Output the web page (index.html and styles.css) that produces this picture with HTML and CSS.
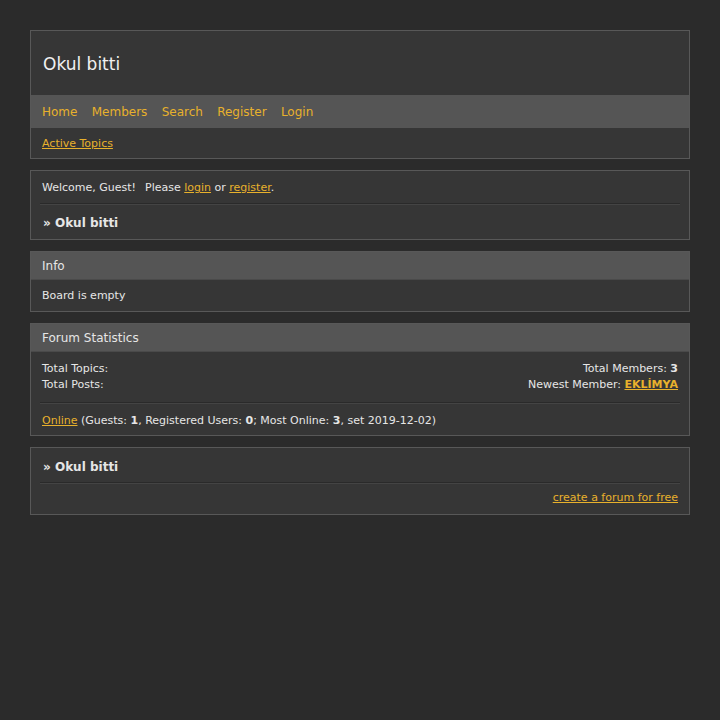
FILE: index.html
```html
<!DOCTYPE html>
<html>
<head>
<meta charset="utf-8">
<link rel="stylesheet" href="styles.css">
</head>
<body>
<div class="wrap">
  <div class="panel header">
    <div class="title">Okul bitti</div>
    <div class="nav">
      <a href="#">Home</a><a href="#">Members</a><a href="#">Search</a><a href="#">Register</a><a href="#">Login</a>
    </div>
    <div class="subnav"><a href="#">Active Topics</a></div>
  </div>

  <div class="panel">
    <div class="welcome">Welcome, Guest!<span class="gap"></span>Please <a href="#">login</a> or <a href="#">register</a>.</div>
    <div class="sep"></div>
    <div class="crumb">» Okul bitti</div>
  </div>

  <div class="panel">
    <div class="phead">Info</div>
    <div class="pbody">Board is empty</div>
  </div>

  <div class="panel">
    <div class="phead">Forum Statistics</div>
    <div class="stats">
      <div class="col">
        <div class="row">Total Topics:</div>
        <div class="row">Total Posts:</div>
      </div>
      <div class="col right">
        <div class="row">Total Members: <b>3</b></div>
        <div class="row">Newest Member: <a href="#" class="member">EKLİMYA</a></div>
      </div>
    </div>
    <div class="sep"></div>
    <div class="online"><a href="#">Online</a> (Guests: <b>1</b>, Registered Users: <b>0</b>; Most Online: <b>3</b>, set 2019-12-02)</div>
  </div>

  <div class="panel">
    <div class="crumb top">» Okul bitti</div>
    <div class="sep"></div>
    <div class="free"><a href="#">create a forum for free</a></div>
  </div>
</div>
</body>
</html>
```

FILE: styles.css
```css
html, body {
  margin: 0;
  padding: 0;
  background: #2b2b2b;
  font-family: "DejaVu Sans", sans-serif;
  color: #e6e6e6;
}
a { color: #e8b12c; }
.wrap {
  padding: 30px;
  display: flex;
  flex-direction: column;
  gap: 11px;
}
.panel {
  background: #363636;
  border: 1px solid #585858;
  font-size: 11px;
}
.title {
  height: 62px;
  padding-top: 2px;
  display: flex;
  align-items: center;
  padding-left: 12px;
  font-size: 17px;
  color: #f0f0f0;
}
.nav {
  background: #555555;
  height: 33px;
  display: flex;
  align-items: center;
  padding-left: 11px;
  gap: 14.3px;
  font-size: 12px;
}
.nav a { text-decoration: none; }
.subnav {
  height: 30px;
  display: flex;
  align-items: center;
  padding-left: 11px;
}
.welcome {
  padding: 10px 11px 9px;
  line-height: 13px;
}
.gap {
  display: inline-block;
  width: 9px;
}
.sep {
  height: 0;
  border-top: 1px solid #2a2a2a;
  border-bottom: 1px solid #444;
  margin: 0 9px;
}
.crumb {
  font-weight: bold;
  font-size: 12px;
  padding: 11px 12px 9px;
  line-height: 14px;
}
.crumb.top {
  padding: 12px 12px 8px;
}
.phead {
  background: #555555;
  height: 27px;
  display: flex;
  align-items: center;
  padding-left: 11px;
  font-size: 12px;
  border-bottom: 1px solid #4a4a4a;
}
.pbody {
  padding: 9px 11px 9px;
  line-height: 13px;
}
.stats {
  display: flex;
  justify-content: space-between;
  padding: 9px 11px 9px;
}
.row {
  height: 16px;
  line-height: 16px;
  white-space: nowrap;
}
.right { text-align: right; }
.member { font-weight: bold; }
.online {
  padding: 10px 11px 8px;
  line-height: 13px;
}
.free {
  text-align: right;
  padding: 7px 11px 10px;
  line-height: 13px;
}
```
